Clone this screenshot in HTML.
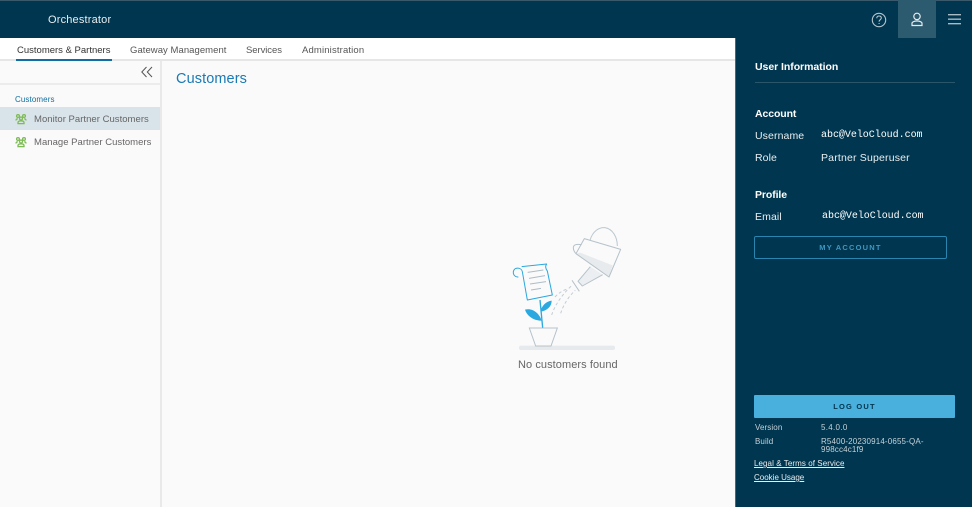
<!DOCTYPE html>
<html><head><meta charset="utf-8"><style>
*{box-sizing:border-box}
html,body{margin:0;padding:0}
body{width:972px;height:507px;position:relative;overflow:hidden;background:#fafafa;font-family:"Liberation Sans",sans-serif;color:#565656}
.a{position:absolute;white-space:nowrap;line-height:14px}
.w{color:#e8eef1}
.b{font-weight:bold;color:#fff;font-size:11px}
.m{font-family:"Liberation Mono",monospace;font-size:10px;letter-spacing:-.03px;color:#fff}
</style></head><body>
<div class="a" style="left:0;top:0;width:972px;height:38px;background:#00364f;border-top:1px solid #3a5a6c"></div>
<div class="a w" style="left:48px;top:13px;font-size:11px;letter-spacing:.18px">Orchestrator</div>
<div class="a" style="left:898px;top:0;width:38px;height:38px;background:#2c5a6f"></div>
<svg class="a" style="left:870px;top:11px" width="18" height="18" viewBox="0 0 18 18" fill="none" stroke="#b5c6cf" stroke-width="1.100"><circle cx="9" cy="9" r="6.700"/><path d="M6.800 7.200c0-1.400 1-2.200 2.300-2.200s2.200.8 2.200 2c0 1.700-2.200 1.700-2.200 3.600"/><path d="M9.100 12v1"/></svg>
<svg class="a" style="left:908px;top:11px" width="18" height="17" viewBox="0 0 18 17" fill="none" stroke="#e3ebef" stroke-width="1.200"><circle cx="9" cy="5.400" r="3.200"/><path d="M4 14.500v-2.200c0-1.300 2.200-2.300 5-2.300s5 1 5 2.300v2.200z"/></svg>
<svg class="a" style="left:948px;top:13px" width="13" height="12" viewBox="0 0 13 12" fill="none" stroke="#a9bcc6" stroke-width="1.400"><path d="M0 1.700h13M0 6.200h13M0 10.700h13"/></svg>

<div class="a" style="left:0;top:38px;width:735px;height:23px;background:#fff;border-bottom:2px solid #e6e6e6"></div>
<div class="a" style="left:16px;top:59px;width:96px;height:2px;background:#0f6fa4"></div>
<div class="a" style="left:17px;top:44px;font-size:9.500px;letter-spacing:0;color:#333">Customers &amp; Partners</div>
<div class="a" style="left:130px;top:44px;font-size:9.500px;letter-spacing:.05px;color:#565656">Gateway Management</div>
<div class="a" style="left:246px;top:44px;font-size:9.500px;letter-spacing:-.07px;color:#565656">Services</div>
<div class="a" style="left:302px;top:44px;font-size:9.500px;letter-spacing:.15px;color:#565656">Administration</div>

<div class="a" style="left:0;top:61px;width:162px;height:446px;background:#fafafa;border-right:2px solid #e9e9e9"></div>
<div class="a" style="left:0;top:83px;width:160px;height:2px;background:#ececec"></div>
<svg class="a" style="left:141px;top:66px" width="12" height="12" viewBox="0 0 12 12" fill="none" stroke="#555" stroke-width="1"><path d="M5.500 1 .8 6l4.700 5M11 1 6.300 6l4.700 5"/></svg>
<div class="a" style="left:15px;top:93px;font-size:8px;letter-spacing:.1px;color:#0f6fa4">Customers</div>
<div class="a" style="left:0;top:107px;width:160px;height:23px;background:#d9e4ea"></div>
<svg class="a" style="left:15px;top:113px" width="12" height="12" viewBox="0 0 12 12" fill="none" stroke="#7dbb55" stroke-width="1.300"><circle cx="3" cy="3" r="1.400"/><circle cx="9" cy="3" r="1.400"/><circle cx="6" cy="5.500" r="1.500"/><path d="M3 10.600V9.500c0-1.200 1.300-1.700 3-1.700s3 .5 3 1.700v1.100zM1 7.500c0-1 .7-1.700 1.800-1.700M11 7.500c0-1-.7-1.700-1.800-1.700"/></svg>
<div class="a" style="left:34px;top:113px;font-size:9.500px;letter-spacing:.03px;color:#666">Monitor Partner Customers</div>
<svg class="a" style="left:15px;top:136px" width="12" height="12" viewBox="0 0 12 12" fill="none" stroke="#7dbb55" stroke-width="1.300"><circle cx="3" cy="3" r="1.400"/><circle cx="9" cy="3" r="1.400"/><circle cx="6" cy="5.500" r="1.500"/><path d="M3 10.600V9.500c0-1.200 1.300-1.700 3-1.700s3 .5 3 1.700v1.100zM1 7.500c0-1 .7-1.700 1.800-1.700M11 7.500c0-1-.7-1.700-1.800-1.700"/></svg>
<div class="a" style="left:34px;top:136px;font-size:9.500px;letter-spacing:.03px;color:#666">Manage Partner Customers</div>
<div class="a" style="left:176px;top:72px;font-size:14.500px;letter-spacing:.1px;color:#1a7ab5">Customers</div>

<svg class="a" style="left:490px;top:215px" width="150" height="165" viewBox="0 0 450 495" fill="none">
<rect x="87" y="392" width="288" height="13" rx="6" fill="#e6eaed"/>
<path d="M118 339h84l-19 54h-46z" stroke="#b5c2ca" stroke-width="3" fill="#fafafa"/>
<path d="M150 255 158 338" stroke="#2aa8e0" stroke-width="4"/>
<path d="M155 317C148 295 128 278 105 284c6 20 28 34 50 33z" fill="#2aa8e0"/>
<path d="M152 290c2-16 14-30 33-33 0 18-14 30-33 33z" fill="#2aa8e0"/>
<path d="M95 155 170 147C165 153 167 162 172 168L187 240 112 255 97 170C95 158 74 154 70 170 69 180 76 187 85 186" stroke="#2aa8e0" stroke-width="3" stroke-linejoin="round" fill="#fafafa"/>
<path d="M113 172l47-7M117 190l48-8M120 207l48-7M123 225l30-5" stroke="#aebcc5" stroke-width="3"/>
<path d="M185 300C195 270 215 240 245 212M212 295C220 270 235 245 256 226M195 246C205 235 218 226 232 222" stroke="#c3cdd4" stroke-width="3" stroke-dasharray="9 7"/>
<path d="M300 76C308 48 328 36 345 38 368 42 382 66 382 93" stroke="#bcc8d0" stroke-width="3"/>
<path d="M271 113 368 151 357 186 258 116z" fill="#e8ebee"/>
<path d="M283 71 392 103 357 186 258 116z" stroke="#b5c2ca" stroke-width="3" stroke-linejoin="round"/>
<path d="M275 89C258 86 250 90 250 98 250 106 254 112 258 116" stroke="#b5c2ca" stroke-width="3"/>
<path d="M301 155 264 199 277 213 338 179" stroke="#b5c2ca" stroke-width="3" fill="#eceff1" stroke-linejoin="round"/>
<path d="M246 196 268 229" stroke="#b5c2ca" stroke-width="3"/>
</svg>
<div class="a" style="left:518px;top:358px;font-size:11px;letter-spacing:.07px;color:#666">No customers found</div>

<div class="a" style="left:735px;top:38px;width:237px;height:469px;background:#00364f;border-left:1px solid #48687a"></div>
<div class="a b" style="left:755px;top:60px;font-size:10.500px;letter-spacing:-.05px">User Information</div>
<div class="a" style="left:755px;top:82px;width:200px;height:1px;background:#2b5569"></div>
<div class="a b" style="left:755px;top:107px;font-size:10.500px;letter-spacing:-.1px">Account</div>
<div class="a w" style="left:755px;top:129px;font-size:10.500px;letter-spacing:.1px">Username</div>
<div class="a m" style="left:821px;top:129px">abc@VeloCloud.com</div>
<div class="a w" style="left:755px;top:151px;font-size:10.500px;letter-spacing:.1px">Role</div>
<div class="a w" style="left:821px;top:151px;font-size:10.500px;letter-spacing:.18px">Partner Superuser</div>
<div class="a b" style="left:755px;top:188px;font-size:10.500px;letter-spacing:-.1px">Profile</div>
<div class="a w" style="left:755px;top:210px;font-size:10.500px;letter-spacing:.1px">Email</div>
<div class="a m" style="left:822px;top:210px">abc@VeloCloud.com</div>
<div class="a" style="left:754px;top:236px;width:193px;height:23px;border:1px solid #2a85b0;border-radius:2px;text-align:center;font-size:7.500px;font-weight:bold;letter-spacing:1.200px;line-height:21px;color:#3f97c2">MY ACCOUNT</div>
<div class="a" style="left:754px;top:395px;width:201px;height:23px;background:#49afdc;border-radius:1px;text-align:center;font-size:7.500px;font-weight:bold;letter-spacing:1.200px;line-height:23px;color:#00364f">LOG OUT</div>
<div class="a w" style="left:755px;top:421px;font-size:8px;color:#c5d2d9;letter-spacing:.1px">Version</div>
<div class="a w" style="left:821px;top:421px;font-size:8px;color:#c5d2d9;letter-spacing:.3px">5.4.0.0</div>
<div class="a w" style="left:755px;top:435px;font-size:8px;color:#c5d2d9;letter-spacing:.1px">Build</div>
<div class="a w" style="left:821px;top:435px;font-size:8px;color:#c5d2d9;letter-spacing:.15px;line-height:8px;padding-top:3px">R5400-20230914-0655-QA-<br>998cc4c1f9</div>
<div class="a w" style="left:754px;top:457px;font-size:8px;letter-spacing:.07px;text-decoration:underline">Legal &amp; Terms of Service</div>
<div class="a w" style="left:754px;top:471px;font-size:8px;letter-spacing:0;text-decoration:underline">Cookie Usage</div>
</body></html>
